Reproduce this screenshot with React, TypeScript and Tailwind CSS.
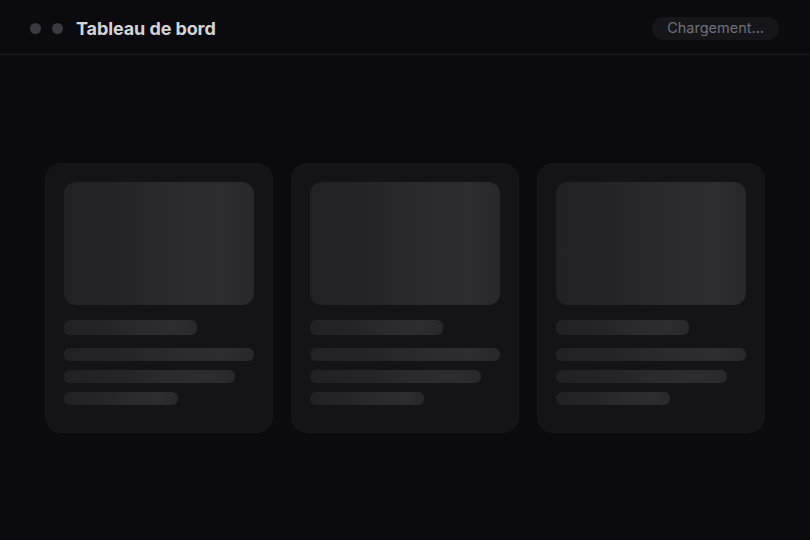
import React from "react";

function Shimmer({ className }: { className: string }) {
  return (
    <div
      className={`bg-[linear-gradient(90deg,#212125_0%,#252529_35%,#2a2a2f_60%,#2c2c31_85%,#28282c_100%)] ${className}`}
    />
  );
}

function SkeletonCard() {
  return (
    <div className="flex h-[270px] flex-col rounded-2xl border border-[#17171b] bg-[#141418] p-[18px]">
      <Shimmer className="h-[123px] w-full rounded-xl" />
      <Shimmer className="mt-[15px] h-[15px] w-[70%] rounded-md" />
      <Shimmer className="mt-[13px] h-[13px] w-full rounded-md" />
      <Shimmer className="mt-[9px] h-[13px] w-[90%] rounded-md" />
      <Shimmer className="mt-[9px] h-[13px] w-[60%] rounded-md" />
    </div>
  );
}

export default function App() {
  return (
    <div className="flex h-[540px] w-[810px] flex-col bg-[#0a0a0f] font-['Inter','Liberation_Sans',sans-serif]">
      <header className="flex h-[55px] shrink-0 items-center justify-between border-b border-[#1a1a1f] pt-[2px] pl-[30px] pr-[31px]">
        <div className="flex items-center">
          <span className="h-[11px] w-[11px] rounded-full bg-[#3a3a40]" />
          <span className="ml-[11px] h-[11px] w-[11px] rounded-full bg-[#3a3a40]" />
          <h1 className="ml-[13px] text-[18px] font-bold tracking-[-0.1px] text-[#d4d4d8]">Tableau de bord</h1>
        </div>
        <div className="flex h-[23px] items-center rounded-full bg-[#16161a] px-[15px] text-[14.5px] text-[#707077]">
          Chargement...
        </div>
      </header>
      <main className="flex flex-1 items-center justify-center">
        <div className="grid w-[720px] grid-cols-3 gap-[18px]">
          <SkeletonCard />
          <SkeletonCard />
          <SkeletonCard />
        </div>
      </main>
    </div>
  );
}
